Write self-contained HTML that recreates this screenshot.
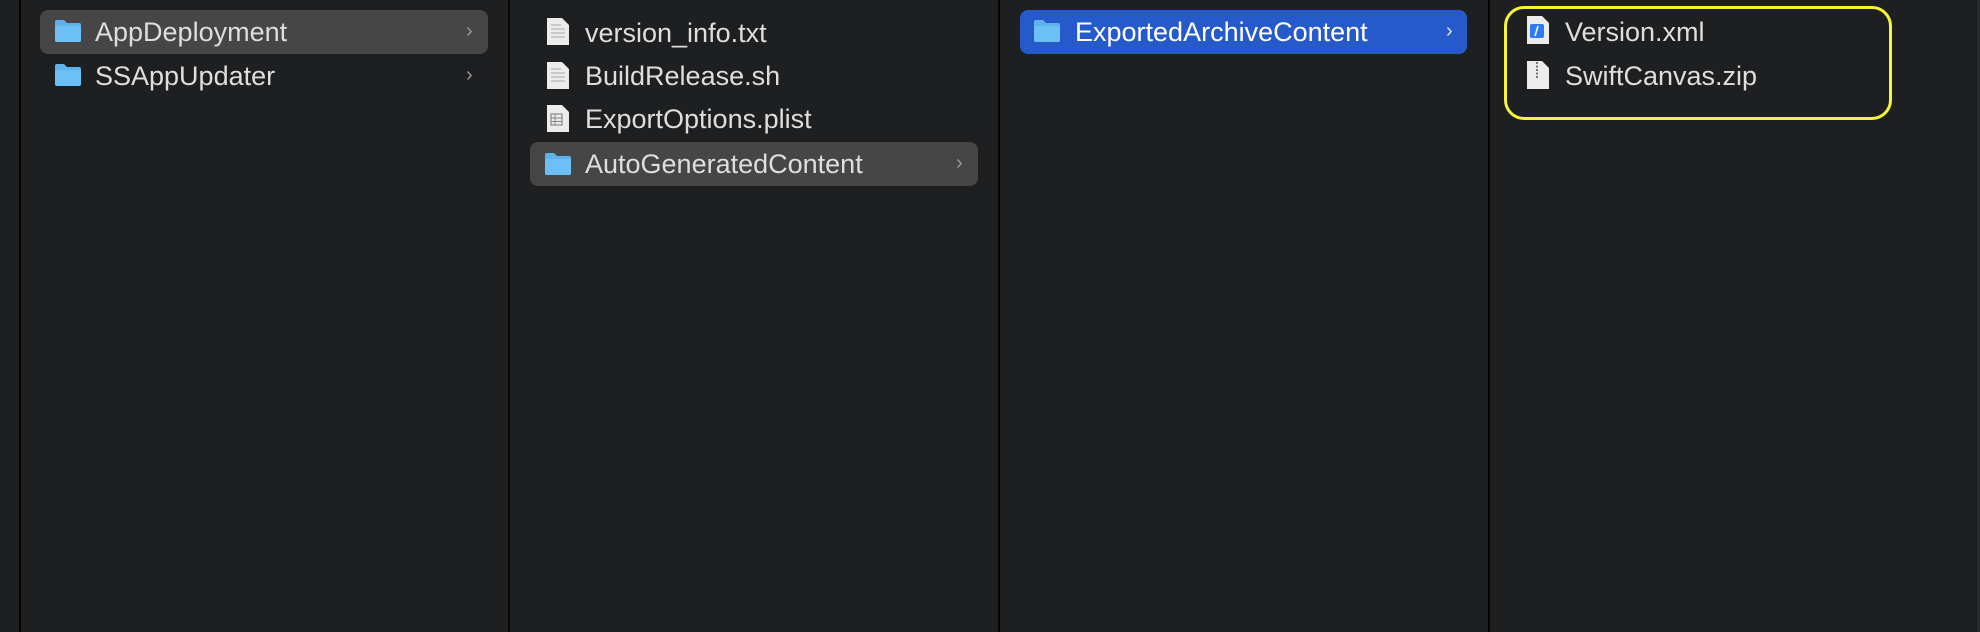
<!DOCTYPE html>
<html><head><meta charset="utf-8"><style>
*{margin:0;padding:0;box-sizing:border-box}
body{width:1980px;height:632px;background:#1e1f21;position:relative;overflow:hidden;font-family:"Liberation Sans",sans-serif;color:#dedede;font-size:27px}
.div{position:absolute;top:0;width:2px;height:632px;background:#050505}
.hl{position:absolute;height:44px;border-radius:8px}
.row{position:absolute;height:44px;line-height:44px;white-space:nowrap;margin-top:1px}
.chev{position:absolute;color:#9a9a9a;font-size:20px;line-height:44px}
svg{position:absolute}
</style></head><body>
<div class="div" style="left:19px"></div>
<div class="div" style="left:508px"></div>
<div class="div" style="left:998px"></div>
<div class="div" style="left:1488px"></div>
<div style="position:absolute;left:1977px;top:0;width:3px;height:632px;background:#2a2b2d"></div>

<!-- col1 -->
<div class="hl" style="left:40px;top:10px;width:448px;background:#464647"></div>
<svg style="left:54px;top:19px" width="28" height="24" viewBox="0 0 28 24"><path d="M1 3q0-2 2-2h7l3 3h12q2 0 2 2v15q0 2-2 2H3q-2 0-2-2z" fill="#5eb2ec"/><rect x="1" y="7" width="26" height="16" rx="2" fill="#6cc0f5"/></svg>
<div class="row" style="left:95px;top:9px">AppDeployment</div>
<div class="chev" style="left:466px;top:9px">›</div>
<svg style="left:54px;top:63px" width="28" height="24" viewBox="0 0 28 24"><path d="M1 3q0-2 2-2h7l3 3h12q2 0 2 2v15q0 2-2 2H3q-2 0-2-2z" fill="#5eb2ec"/><rect x="1" y="7" width="26" height="16" rx="2" fill="#6cc0f5"/></svg>
<div class="row" style="left:95px;top:53px">SSAppUpdater</div>
<div class="chev" style="left:466px;top:53px">›</div>

<!-- col2 -->
<svg style="left:546px;top:17px" width="24" height="29" viewBox="0 0 24 29"><path d="M1 1h15l7 7v20H1z" fill="#ececec"/><path d="M5 8h10M5 12h14M5 16h14M5 20h14" stroke="#aaa" stroke-width="1"/></svg>
<div class="row" style="left:585px;top:10px">version_info.txt</div>
<svg style="left:546px;top:61px" width="24" height="29" viewBox="0 0 24 29"><path d="M1 1h15l7 7v20H1z" fill="#ececec"/><path d="M5 8h10M5 12h14M5 16h14M5 20h14" stroke="#aaa" stroke-width="1"/></svg>
<div class="row" style="left:585px;top:53px">BuildRelease.sh</div>
<svg style="left:546px;top:104px" width="24" height="29" viewBox="0 0 24 29"><path d="M1 1h15l7 7v20H1z" fill="#ececec"/><rect x="5" y="10" width="11" height="11" fill="none" stroke="#888" stroke-width="1.2"/><path d="M5 14h11M5 17.5h11M9 10v11" stroke="#888" stroke-width="1"/></svg>
<div class="row" style="left:585px;top:96px">ExportOptions.plist</div>
<div class="hl" style="left:530px;top:142px;width:448px;background:#464647"></div>
<svg style="left:544px;top:152px" width="28" height="24" viewBox="0 0 28 24"><path d="M1 3q0-2 2-2h7l3 3h12q2 0 2 2v15q0 2-2 2H3q-2 0-2-2z" fill="#5eb2ec"/><rect x="1" y="7" width="26" height="16" rx="2" fill="#6cc0f5"/></svg>
<div class="row" style="left:585px;top:141px">AutoGeneratedContent</div>
<div class="chev" style="left:956px;top:141px">›</div>

<!-- col3 -->
<div class="hl" style="left:1020px;top:10px;width:447px;background:#2659c9"></div>
<svg style="left:1033px;top:19px" width="28" height="24" viewBox="0 0 28 24"><path d="M1 3q0-2 2-2h7l3 3h12q2 0 2 2v15q0 2-2 2H3q-2 0-2-2z" fill="#5eb2ec"/><rect x="1" y="7" width="26" height="16" rx="2" fill="#6cc0f5"/></svg>
<div class="row" style="left:1075px;top:9px;color:#fff">ExportedArchiveContent</div>
<div class="chev" style="left:1446px;top:9px;color:#dfe6f8">›</div>

<!-- col4 -->
<div style="position:absolute;left:1504px;top:6px;width:388px;height:114px;border:3px solid #f7f23b;border-radius:20px"></div>
<svg style="left:1526px;top:15px" width="24" height="30" viewBox="0 0 24 30"><path d="M1 1h15l7 7v21H1z" fill="#ececec"/><rect x="4" y="9" width="14" height="14" rx="2" fill="#2f7cf0"/><path d="M12 11l-3 10" stroke="#fff" stroke-width="1.5"/></svg>
<div class="row" style="left:1565px;top:9px">Version.xml</div>
<svg style="left:1526px;top:60px" width="24" height="30" viewBox="0 0 24 30"><path d="M1 1h15l7 7v21H1z" fill="#ececec"/><path d="M11 2v16" stroke="#777" stroke-width="2" stroke-dasharray="2 1.5"/></svg>
<div class="row" style="left:1565px;top:53px">SwiftCanvas.zip</div>
</body></html>
